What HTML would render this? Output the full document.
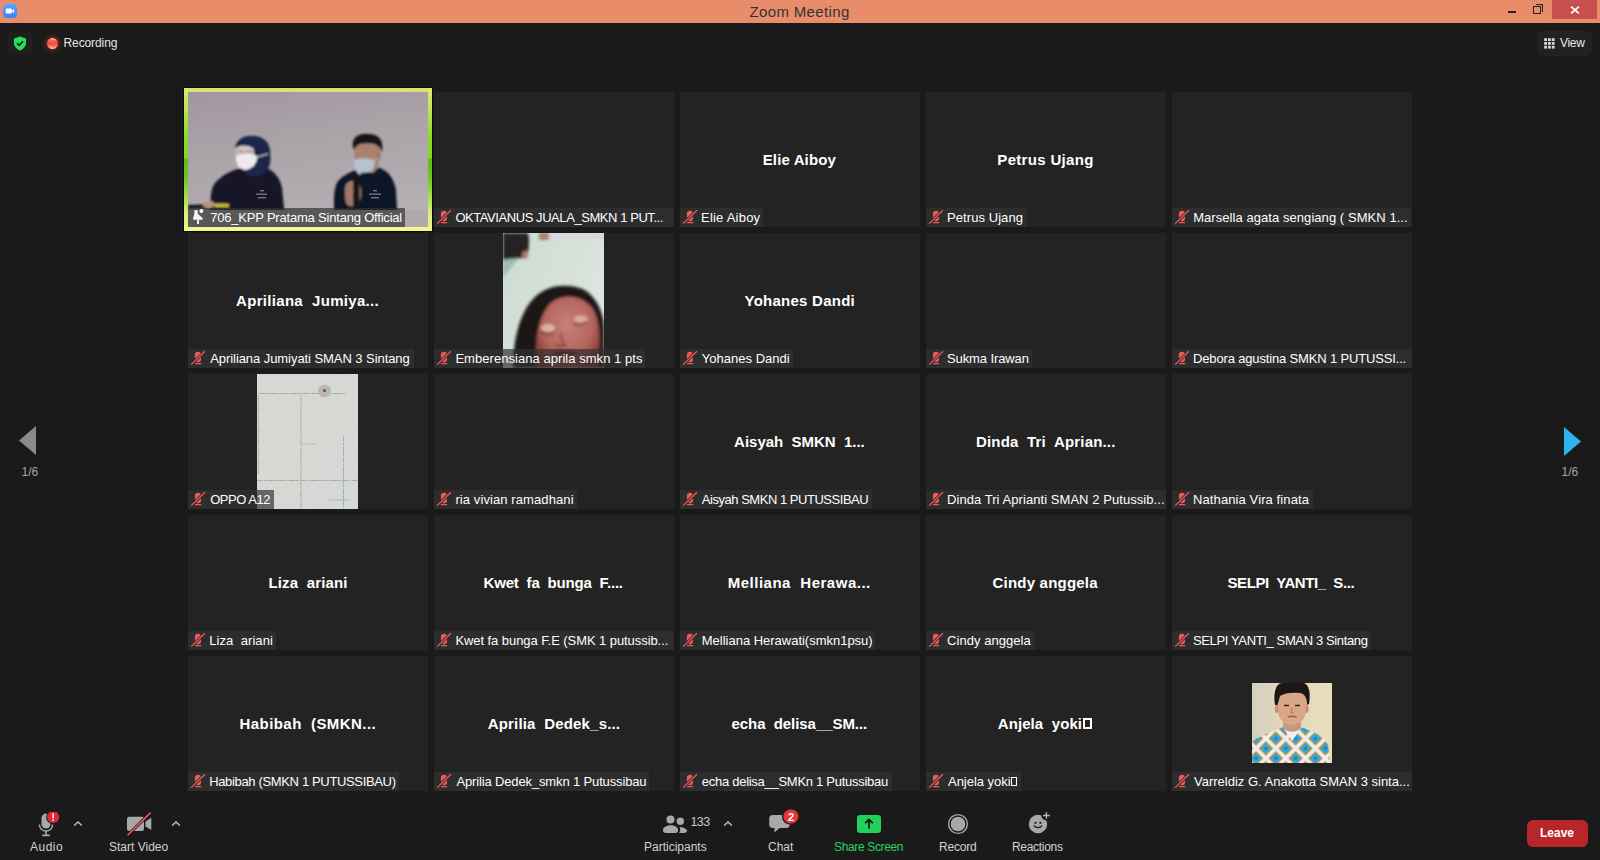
<!DOCTYPE html>
<html><head><meta charset="utf-8"><title>Zoom Meeting</title>
<style>
*{margin:0;padding:0;box-sizing:border-box}
html,body{width:1600px;height:860px;overflow:hidden;background:#1a1a1a;font-family:"Liberation Sans",sans-serif;position:relative}
.abs{position:absolute}
#title{left:0;top:0;width:1600px;height:23px;background:#e98c6a}
.tile{position:absolute;width:240px;height:135px;background:#232323;overflow:hidden}
.cn{position:absolute;top:58px;color:#fff;font-weight:bold;font-size:15px;white-space:pre;line-height:20px}
.lb{position:absolute;left:0;top:116px;height:19px;background:rgba(51,51,51,.69);overflow:hidden}
.lb span{position:absolute;left:22px;top:2px;color:#fff;font-size:13px;line-height:15px;white-space:pre}
.lb .mic{position:absolute;left:0;top:0}
.tl{position:absolute;top:841px;color:#d2d2d2;font-size:12px;line-height:13px;white-space:nowrap}
.tb{position:absolute;color:#c9c9c9;font-size:12px;white-space:nowrap;line-height:14px}
</style></head><body>

<div id="title" class="abs">
<div class="abs" style="left:749.5px;top:2.5px;font-size:15px;line-height:17px;color:#333;white-space:nowrap;letter-spacing:0.35px">Zoom Meeting</div>
<div class="abs" style="left:3px;top:4px;width:14px;height:14px;background:linear-gradient(to bottom,#5aa6ff,#3a82f6);border-radius:4px"></div>
<svg class="abs" style="left:5px;top:8px" width="10" height="6" viewBox="0 0 10 6"><rect x="0.7" y="0.4" width="6.2" height="5" rx="1" fill="#fff"/><path d="M7.2 2.4L9.1 0.9V4.9L7.2 3.4z" fill="#fff"/></svg>
<div class="abs" style="left:1508px;top:11px;width:8px;height:2px;background:#222"></div>
<div class="abs" style="left:1533px;top:6px;width:8px;height:8px;border:1.5px solid #222"></div><div class="abs" style="left:1535.5px;top:4px;width:7.5px;height:7.5px;border-top:1.5px solid #222;border-right:1.5px solid #222"></div>
<div class="abs" style="left:1552px;top:0;width:45px;height:19px;background:#c94f4f"></div>
<svg class="abs" style="left:1570px;top:4.5px" width="10" height="10" viewBox="0 0 10 10"><path d="M1.2 1.6L8.8 8.4M8.8 1.6L1.2 8.4" stroke="#fff" stroke-width="1.7"/></svg>
</div>
<div class="abs" style="left:8px;top:31px;width:24px;height:24px;background:#1f1f1f;border-radius:5px"></div>
<svg class="abs" style="left:13px;top:36px" width="14" height="15" viewBox="0 0 14 15"><path d="M7 0.5L13 2.5V7c0 3.6-2.6 6.2-6 7.5C3.6 13.2 1 10.6 1 7V2.5z" fill="#24df5b"/><path d="M4 7.3L6.1 9.4 10 5.4" stroke="#111" stroke-width="1.6" fill="none"/></svg>
<div class="abs" style="left:46.5px;top:38px;width:11px;height:11px;border-radius:50%;background:linear-gradient(to bottom,#ffc8bc 0%,#ff6a58 22%,#f24a38 50%,#ff7a68 78%,#ffd0c4 100%);box-shadow:0 0 5px 2px rgba(150,60,20,.55)"></div>
<div class="tb" style="left:63.5px;top:36px;color:#e6e6e6;font-size:12px;letter-spacing:-0.1px">Recording</div>
<div class="abs" style="left:1537px;top:31px;width:55px;height:25px;background:#222;border-radius:6px"></div>
<svg class="abs" style="left:1543.5px;top:37.5px" width="11" height="11" viewBox="0 0 11 11" fill="#d6d6d6"><rect x="0.2" y="0.2" width="2.8" height="2.8"/><rect x="4" y="0.2" width="2.8" height="2.8"/><rect x="7.8" y="0.2" width="2.8" height="2.8"/><rect x="0.2" y="4" width="2.8" height="2.8"/><rect x="4" y="4" width="2.8" height="2.8"/><rect x="7.8" y="4" width="2.8" height="2.8"/><rect x="0.2" y="7.8" width="2.8" height="2.8"/><rect x="4" y="7.8" width="2.8" height="2.8"/><rect x="7.8" y="7.8" width="2.8" height="2.8"/></svg>
<div class="tb" style="left:1560px;top:36px;color:#e6e6e6;font-size:12px;letter-spacing:-0.3px">View</div>
<div class="tile" style="left:188px;top:92px"><svg class="abs" style="left:0;top:0" width="240" height="135" viewBox="0 0 240 135">
<defs><linearGradient id="bg0" x1="0" y1="0" x2="0.3" y2="1"><stop offset="0" stop-color="#a1989f"/><stop offset="0.5" stop-color="#aba4a9"/><stop offset="1" stop-color="#b4afb2"/></linearGradient>
<filter id="bl0" x="-10%" y="-10%" width="120%" height="120%"><feGaussianBlur stdDeviation="0.8"/></filter>
<filter id="bl0b"><feGaussianBlur stdDeviation="0.35"/></filter></defs>
<rect width="240" height="135" fill="url(#bg0)"/>
<g filter="url(#bl0)">
<path d="M22 135 L22.5 108 C23 98 25 92 30 88 C38 80 50 76 58 75 L76 75 C86 78 92 86 94 96 L96 116 L97 135z" fill="#121828"/>
<path d="M47 58 C47 50 53 44 62 44 C72 43 81 48 82 58 L82.5 68 C82 76 78 82 72 84 L58 84 C56 80 60 76 66 74 L66 60 C62 54 52 53 47 58z" fill="#1b2748"/>
<path d="M47 57 C50 53 58 52 65 56 C67 60 67 68 66 74 L50 76 C48 70 47 64 47 57z" fill="#cfc2bf"/>
<path d="M48 60.5 C51 59 54 59 56 60.5 M58 60.5 C60 59 63 59 65 60.5" stroke="#5a5050" stroke-width="0.8" fill="none"/>
<path d="M48 65 C52 61 62 61 69 64 C70 69 66 76 58 78 C52 78 48 72 48 65z" fill="#eeeaee"/>
<path d="M69 65 L80 62" stroke="#e2e2ea" stroke-width="1"/>
<path d="M0 113 L41 111.5 L41 116 L0 117z" fill="#171717"/>
<rect x="26.5" y="111.5" width="14.5" height="4" rx="1.5" fill="#c4b63e"/>
<ellipse cx="21" cy="112.5" rx="6" ry="3.6" fill="#b89484"/>
<path d="M146 135 L146 108 C146 98 148 90 152 87 C160 80 170 77 176 76 L192 76 C202 80 206 88 208 98 L210 135z" fill="#111726"/>
<path d="M166 58 C166 48 172 43 180 43 C189 43 193 50 192 60 L190 74 C188 81 182 83 176 82 C170 81 166 74 166 58z" fill="#a8826e"/>
<ellipse cx="190.5" cy="64" rx="2.4" ry="4" fill="#9c7462"/>
<path d="M165 56 C163 46 170 41 180 42 C191 42 196 48 194 60 L191 55 C186 50 178 51 172 52 C170 53 167 55 166 58z" fill="#171413"/>
<path d="M166 68 C172 66 181 66 187 68.5 C187 77 182 83 175 83.5 C169 83 166 77 166 68z" fill="#b6c2ce"/>
<path d="M187 68 L191 65" stroke="#c4ced8" stroke-width="0.9"/>
<path d="M172 81 L184 80 L178 90z" fill="#0e1220"/>
<path d="M157 99 C156 92 161 88 167 89 C173 91 174 98 173 105 C172 111 167 115 161 114 C157 112 157 106 157 99z" fill="#a07666"/>
<rect x="165" y="83" width="6.5" height="33" rx="2.5" fill="#141414"/>
</g>
<rect x="0" y="118" width="240" height="17" fill="#aeaaac"/>
<g filter="url(#bl0b)" fill="#bcc2d0" opacity=".55">
<rect x="72" y="98" width="4" height="1.4"/><rect x="68" y="101.5" width="11" height="1.4"/><rect x="70" y="105" width="8" height="1.4"/>
<rect x="185" y="98" width="4" height="1.4"/><rect x="181" y="101.5" width="12" height="1.4"/><rect x="183" y="105" width="8" height="1.4"/>
</g></svg><div class="lb" style="width:217px;"><svg class="mic" width="18" height="18" viewBox="0 0 18 18"><path d="M6.5 2H9.5L10 6L14.6 10V11.8H5.1V10L6.3 6z" fill="#f4f4f4"/><rect x="9" y="11.5" width="2" height="4.5" fill="#eee"/><circle cx="13.4" cy="3.1" r="2" fill="#f8f8f8"/></svg><span style="left:22.20px;letter-spacing:-0.200px">706_KPP Pratama Sintang Official</span></div></div>
<div class="tile" style="left:434px;top:92px"><div class="lb" style="width:240px;"><svg class="mic" width="18" height="18" viewBox="0 0 18 18"><rect x="6.9" y="2.8" width="6.1" height="10.6" rx="3.05" fill="#ee5a58"/><rect x="6.9" y="14.1" width="6.4" height="1.1" rx=".5" fill="#ee5a58"/><path d="M3.2 15.6L16.9 2.2" stroke="#2e2e2e" stroke-width="3"/><path d="M3.2 15.6L16.9 2.2" stroke="#ee5a58" stroke-width="1.3"/></svg><span style="left:21.40px;letter-spacing:-0.434px">OKTAVIANUS JUALA_SMKN 1 PUT...</span></div></div>
<div class="tile" style="left:680px;top:92px"><div class="cn" style="left:82.70px;letter-spacing:0.133px">Elie Aiboy</div><div class="lb" style="width:83px;"><svg class="mic" width="18" height="18" viewBox="0 0 18 18"><rect x="6.9" y="2.8" width="6.1" height="10.6" rx="3.05" fill="#ee5a58"/><rect x="6.9" y="14.1" width="6.4" height="1.1" rx=".5" fill="#ee5a58"/><path d="M3.2 15.6L16.9 2.2" stroke="#2e2e2e" stroke-width="3"/><path d="M3.2 15.6L16.9 2.2" stroke="#ee5a58" stroke-width="1.3"/></svg><span style="left:21.00px;letter-spacing:0.222px">Elie Aiboy</span></div></div>
<div class="tile" style="left:926px;top:92px"><div class="cn" style="left:71.30px;letter-spacing:0.327px">Petrus Ujang</div><div class="lb" style="width:100px;"><svg class="mic" width="18" height="18" viewBox="0 0 18 18"><rect x="6.9" y="2.8" width="6.1" height="10.6" rx="3.05" fill="#ee5a58"/><rect x="6.9" y="14.1" width="6.4" height="1.1" rx=".5" fill="#ee5a58"/><path d="M3.2 15.6L16.9 2.2" stroke="#2e2e2e" stroke-width="3"/><path d="M3.2 15.6L16.9 2.2" stroke="#ee5a58" stroke-width="1.3"/></svg><span style="left:21.00px;letter-spacing:0.073px">Petrus Ujang</span></div></div>
<div class="tile" style="left:1172px;top:92px"><div class="lb" style="width:239px;"><svg class="mic" width="18" height="18" viewBox="0 0 18 18"><rect x="6.9" y="2.8" width="6.1" height="10.6" rx="3.05" fill="#ee5a58"/><rect x="6.9" y="14.1" width="6.4" height="1.1" rx=".5" fill="#ee5a58"/><path d="M3.2 15.6L16.9 2.2" stroke="#2e2e2e" stroke-width="3"/><path d="M3.2 15.6L16.9 2.2" stroke="#ee5a58" stroke-width="1.3"/></svg><span style="left:21.20px;letter-spacing:0.059px">Marsella agata sengiang ( SMKN 1...</span></div></div>
<div class="tile" style="left:188px;top:233px"><div class="cn" style="left:48.00px;letter-spacing:0.316px">Apriliana  Jumiya...</div><div class="lb" style="width:226px;"><svg class="mic" width="18" height="18" viewBox="0 0 18 18"><rect x="6.9" y="2.8" width="6.1" height="10.6" rx="3.05" fill="#ee5a58"/><rect x="6.9" y="14.1" width="6.4" height="1.1" rx=".5" fill="#ee5a58"/><path d="M3.2 15.6L16.9 2.2" stroke="#2e2e2e" stroke-width="3"/><path d="M3.2 15.6L16.9 2.2" stroke="#ee5a58" stroke-width="1.3"/></svg><span style="left:22.20px;letter-spacing:-0.063px">Apriliana Jumiyati SMAN 3 Sintang</span></div></div>
<div class="tile" style="left:434px;top:233px"><svg class="abs" style="left:69px;top:0" width="101" height="135" viewBox="0 0 101 135">
<defs><filter id="bl6" x="-20%" y="-20%" width="140%" height="140%"><feGaussianBlur stdDeviation="1.4"/></filter>
<linearGradient id="bg6" x1="0" y1="0" x2="1" y2="0.6"><stop offset="0" stop-color="#cbdcd2"/><stop offset="0.6" stop-color="#d6e1da"/><stop offset="1" stop-color="#dfe5e0"/></linearGradient>
<radialGradient id="sk6" cx="0.5" cy="0.4" r="0.65"><stop offset="0" stop-color="#c8807a"/><stop offset="0.6" stop-color="#b4665e"/><stop offset="1" stop-color="#7a3028"/></radialGradient></defs>
<rect width="101" height="135" fill="url(#bg6)"/>
<g filter="url(#bl6)">
<path d="M0 0 H25 C27 8 26 18 23 24 L14 26 L0 27z" fill="#262424"/>
<ellipse cx="22" cy="22" rx="3" ry="4" fill="#a87a70"/>
<path d="M0 27 L16 25 L2 42 L0 44z" fill="#9ebcb4"/>
<path d="M36 0 H101 V7 H36z" fill="#d8d6dc"/>
<path d="M36 0 H46 V7 H36z" fill="#b07a70"/>
<path d="M10 135 C10 108 16 78 34 62 C46 52 64 50 80 56 C94 64 101 80 101 96 V135z" fill="#1e1616"/>
<path d="M34 135 C31 112 34 84 48 70 C60 60 80 62 90 76 C98 90 98 114 94 135z" fill="url(#sk6)"/>
<ellipse cx="45" cy="95" rx="7" ry="4" fill="#e4c0b4" opacity=".85"/>
<ellipse cx="78" cy="86" rx="7" ry="3.6" fill="#e2bcb0" opacity=".8"/>
<path d="M38 99 C42 102 48 102 52 99" stroke="#5a2622" stroke-width="1.4" fill="none"/>
<path d="M70 90 C74 93 80 92 84 88" stroke="#5a2622" stroke-width="1.4" fill="none"/>
<path d="M58 100 C58 106 59 110 62 112 C58 114 54 113 52 111" stroke="#7e3a34" stroke-width="1.8" fill="none"/>
<path d="M48 120 C56 116 68 116 76 120 C68 125 56 125 48 120z" fill="#6a2420"/>
</g></svg><div class="lb" style="width:211px;"><svg class="mic" width="18" height="18" viewBox="0 0 18 18"><rect x="6.9" y="2.8" width="6.1" height="10.6" rx="3.05" fill="#ee5a58"/><rect x="6.9" y="14.1" width="6.4" height="1.1" rx=".5" fill="#ee5a58"/><path d="M3.2 15.6L16.9 2.2" stroke="#2e2e2e" stroke-width="3"/><path d="M3.2 15.6L16.9 2.2" stroke="#ee5a58" stroke-width="1.3"/></svg><span style="left:21.40px;letter-spacing:0.048px">Emberensiana aprila smkn 1 pts</span></div></div>
<div class="tile" style="left:680px;top:233px"><div class="cn" style="left:64.50px;letter-spacing:0.250px">Yohanes Dandi</div><div class="lb" style="width:113px;"><svg class="mic" width="18" height="18" viewBox="0 0 18 18"><rect x="6.9" y="2.8" width="6.1" height="10.6" rx="3.05" fill="#ee5a58"/><rect x="6.9" y="14.1" width="6.4" height="1.1" rx=".5" fill="#ee5a58"/><path d="M3.2 15.6L16.9 2.2" stroke="#2e2e2e" stroke-width="3"/><path d="M3.2 15.6L16.9 2.2" stroke="#ee5a58" stroke-width="1.3"/></svg><span style="left:21.80px;letter-spacing:0.017px">Yohanes Dandi</span></div></div>
<div class="tile" style="left:926px;top:233px"><div class="lb" style="width:106px;"><svg class="mic" width="18" height="18" viewBox="0 0 18 18"><rect x="6.9" y="2.8" width="6.1" height="10.6" rx="3.05" fill="#ee5a58"/><rect x="6.9" y="14.1" width="6.4" height="1.1" rx=".5" fill="#ee5a58"/><path d="M3.2 15.6L16.9 2.2" stroke="#2e2e2e" stroke-width="3"/><path d="M3.2 15.6L16.9 2.2" stroke="#ee5a58" stroke-width="1.3"/></svg><span style="left:21.00px;letter-spacing:-0.109px">Sukma Irawan</span></div></div>
<div class="tile" style="left:1172px;top:233px"><div class="lb" style="width:240px;"><svg class="mic" width="18" height="18" viewBox="0 0 18 18"><rect x="6.9" y="2.8" width="6.1" height="10.6" rx="3.05" fill="#ee5a58"/><rect x="6.9" y="14.1" width="6.4" height="1.1" rx=".5" fill="#ee5a58"/><path d="M3.2 15.6L16.9 2.2" stroke="#2e2e2e" stroke-width="3"/><path d="M3.2 15.6L16.9 2.2" stroke="#ee5a58" stroke-width="1.3"/></svg><span style="left:21.00px;letter-spacing:-0.156px">Debora agustina SMKN 1 PUTUSSI...</span></div></div>
<div class="tile" style="left:188px;top:374px"><svg class="abs" style="left:69px;top:0" width="101" height="135" viewBox="0 0 101 135">
<defs><filter id="bl10"><feGaussianBlur stdDeviation="0.45"/></filter>
<filter id="nz10"><feTurbulence type="fractalNoise" baseFrequency="0.08" numOctaves="2" seed="3"/><feColorMatrix values="0 0 0 0 0.5  0 0 0 0 0.5  0 0 0 0 0.5  0 0 0 0.12 0"/></filter>
<linearGradient id="bg10" x1="0" y1="0" x2="1" y2="1"><stop offset="0" stop-color="#d9dad5"/><stop offset="1" stop-color="#d6dad6"/></linearGradient></defs>
<rect width="101" height="135" fill="url(#bg10)"/>
<rect width="101" height="135" filter="url(#nz10)"/>
<g filter="url(#bl10)" stroke="#767872" stroke-width="0.65" fill="none" stroke-dasharray="1.5 0.7 4 0.9 2 1.4 6 0.6 3 1" opacity=".75">
<path d="M2 19.5 H88"/><path d="M0 106.5 H101"/><path d="M44 21 V135"/><path d="M86.5 62 V135"/><path d="M1.5 21 V100"/>
</g>
<g filter="url(#bl10)" stroke="#7a7c76" stroke-width="0.6" fill="none" opacity=".6">
<path d="M44 70 H60"/><path d="M70 126 H92"/>
</g>
<circle cx="67.5" cy="17" r="6.5" fill="#bdb7ae" filter="url(#bl10)"/>
<circle cx="67.5" cy="16.5" r="1.6" fill="#5e5850"/>
</svg><div class="lb" style="width:86px;"><svg class="mic" width="18" height="18" viewBox="0 0 18 18"><rect x="6.9" y="2.8" width="6.1" height="10.6" rx="3.05" fill="#ee5a58"/><rect x="6.9" y="14.1" width="6.4" height="1.1" rx=".5" fill="#ee5a58"/><path d="M3.2 15.6L16.9 2.2" stroke="#2e2e2e" stroke-width="3"/><path d="M3.2 15.6L16.9 2.2" stroke="#ee5a58" stroke-width="1.3"/></svg><span style="left:22.20px;letter-spacing:-0.457px">OPPO A12</span></div></div>
<div class="tile" style="left:434px;top:374px"><div class="lb" style="width:143px;"><svg class="mic" width="18" height="18" viewBox="0 0 18 18"><rect x="6.9" y="2.8" width="6.1" height="10.6" rx="3.05" fill="#ee5a58"/><rect x="6.9" y="14.1" width="6.4" height="1.1" rx=".5" fill="#ee5a58"/><path d="M3.2 15.6L16.9 2.2" stroke="#2e2e2e" stroke-width="3"/><path d="M3.2 15.6L16.9 2.2" stroke="#ee5a58" stroke-width="1.3"/></svg><span style="left:21.40px;letter-spacing:0.095px">ria vivian ramadhani</span></div></div>
<div class="tile" style="left:680px;top:374px"><div class="cn" style="left:54.10px;letter-spacing:-0.012px">Aisyah  SMKN  1...</div><div class="lb" style="width:192px;"><svg class="mic" width="18" height="18" viewBox="0 0 18 18"><rect x="6.9" y="2.8" width="6.1" height="10.6" rx="3.05" fill="#ee5a58"/><rect x="6.9" y="14.1" width="6.4" height="1.1" rx=".5" fill="#ee5a58"/><path d="M3.2 15.6L16.9 2.2" stroke="#2e2e2e" stroke-width="3"/><path d="M3.2 15.6L16.9 2.2" stroke="#ee5a58" stroke-width="1.3"/></svg><span style="left:21.80px;letter-spacing:-0.470px">Aisyah SMKN 1 PUTUSSIBAU</span></div></div>
<div class="tile" style="left:926px;top:374px"><div class="cn" style="left:50.00px;letter-spacing:0.160px">Dinda  Tri  Aprian...</div><div class="lb" style="width:240px;"><svg class="mic" width="18" height="18" viewBox="0 0 18 18"><rect x="6.9" y="2.8" width="6.1" height="10.6" rx="3.05" fill="#ee5a58"/><rect x="6.9" y="14.1" width="6.4" height="1.1" rx=".5" fill="#ee5a58"/><path d="M3.2 15.6L16.9 2.2" stroke="#2e2e2e" stroke-width="3"/><path d="M3.2 15.6L16.9 2.2" stroke="#ee5a58" stroke-width="1.3"/></svg><span style="left:21.00px;letter-spacing:0.061px">Dinda Tri Aprianti SMAN 2 Putussib...</span></div></div>
<div class="tile" style="left:1172px;top:374px"><div class="lb" style="width:141px;"><svg class="mic" width="18" height="18" viewBox="0 0 18 18"><rect x="6.9" y="2.8" width="6.1" height="10.6" rx="3.05" fill="#ee5a58"/><rect x="6.9" y="14.1" width="6.4" height="1.1" rx=".5" fill="#ee5a58"/><path d="M3.2 15.6L16.9 2.2" stroke="#2e2e2e" stroke-width="3"/><path d="M3.2 15.6L16.9 2.2" stroke="#ee5a58" stroke-width="1.3"/></svg><span style="left:21.00px;letter-spacing:0.105px">Nathania Vira finata</span></div></div>
<div class="tile" style="left:188px;top:515px"><div class="cn" style="left:80.50px;letter-spacing:0.127px">Liza  ariani</div><div class="lb" style="width:88px;"><svg class="mic" width="18" height="18" viewBox="0 0 18 18"><rect x="6.9" y="2.8" width="6.1" height="10.6" rx="3.05" fill="#ee5a58"/><rect x="6.9" y="14.1" width="6.4" height="1.1" rx=".5" fill="#ee5a58"/><path d="M3.2 15.6L16.9 2.2" stroke="#2e2e2e" stroke-width="3"/><path d="M3.2 15.6L16.9 2.2" stroke="#ee5a58" stroke-width="1.3"/></svg><span style="left:21.20px;letter-spacing:0.073px">Liza  ariani</span></div></div>
<div class="tile" style="left:434px;top:515px"><div class="cn" style="left:49.50px;letter-spacing:-0.181px">Kwet  fa  bunga  F....</div><div class="lb" style="width:240px;"><svg class="mic" width="18" height="18" viewBox="0 0 18 18"><rect x="6.9" y="2.8" width="6.1" height="10.6" rx="3.05" fill="#ee5a58"/><rect x="6.9" y="14.1" width="6.4" height="1.1" rx=".5" fill="#ee5a58"/><path d="M3.2 15.6L16.9 2.2" stroke="#2e2e2e" stroke-width="3"/><path d="M3.2 15.6L16.9 2.2" stroke="#ee5a58" stroke-width="1.3"/></svg><span style="left:21.40px;letter-spacing:-0.069px">Kwet fa bunga F.E (SMK 1 putussib...</span></div></div>
<div class="tile" style="left:680px;top:515px"><div class="cn" style="left:47.70px;letter-spacing:0.511px">Melliana  Herawa...</div><div class="lb" style="width:195px;"><svg class="mic" width="18" height="18" viewBox="0 0 18 18"><rect x="6.9" y="2.8" width="6.1" height="10.6" rx="3.05" fill="#ee5a58"/><rect x="6.9" y="14.1" width="6.4" height="1.1" rx=".5" fill="#ee5a58"/><path d="M3.2 15.6L16.9 2.2" stroke="#2e2e2e" stroke-width="3"/><path d="M3.2 15.6L16.9 2.2" stroke="#ee5a58" stroke-width="1.3"/></svg><span style="left:21.80px;letter-spacing:-0.015px">Melliana Herawati(smkn1psu)</span></div></div>
<div class="tile" style="left:926px;top:515px"><div class="cn" style="left:66.50px;letter-spacing:0.212px">Cindy anggela</div><div class="lb" style="width:109px;"><svg class="mic" width="18" height="18" viewBox="0 0 18 18"><rect x="6.9" y="2.8" width="6.1" height="10.6" rx="3.05" fill="#ee5a58"/><rect x="6.9" y="14.1" width="6.4" height="1.1" rx=".5" fill="#ee5a58"/><path d="M3.2 15.6L16.9 2.2" stroke="#2e2e2e" stroke-width="3"/><path d="M3.2 15.6L16.9 2.2" stroke="#ee5a58" stroke-width="1.3"/></svg><span style="left:21.00px;letter-spacing:0.050px">Cindy anggela</span></div></div>
<div class="tile" style="left:1172px;top:515px"><div class="cn" style="left:55.50px;letter-spacing:-0.389px">SELPI  YANTI_  S...</div><div class="lb" style="width:199px;"><svg class="mic" width="18" height="18" viewBox="0 0 18 18"><rect x="6.9" y="2.8" width="6.1" height="10.6" rx="3.05" fill="#ee5a58"/><rect x="6.9" y="14.1" width="6.4" height="1.1" rx=".5" fill="#ee5a58"/><path d="M3.2 15.6L16.9 2.2" stroke="#2e2e2e" stroke-width="3"/><path d="M3.2 15.6L16.9 2.2" stroke="#ee5a58" stroke-width="1.3"/></svg><span style="left:21.00px;letter-spacing:-0.369px">SELPI YANTI_ SMAN 3 Sintang</span></div></div>
<div class="tile" style="left:188px;top:656px"><div class="cn" style="left:51.50px;letter-spacing:0.438px">Habibah  (SMKN...</div><div class="lb" style="width:211px;"><svg class="mic" width="18" height="18" viewBox="0 0 18 18"><rect x="6.9" y="2.8" width="6.1" height="10.6" rx="3.05" fill="#ee5a58"/><rect x="6.9" y="14.1" width="6.4" height="1.1" rx=".5" fill="#ee5a58"/><path d="M3.2 15.6L16.9 2.2" stroke="#2e2e2e" stroke-width="3"/><path d="M3.2 15.6L16.9 2.2" stroke="#ee5a58" stroke-width="1.3"/></svg><span style="left:21.20px;letter-spacing:-0.346px">Habibah (SMKN 1 PUTUSSIBAU)</span></div></div>
<div class="tile" style="left:434px;top:656px"><div class="cn" style="left:53.75px;letter-spacing:0.167px">Aprilia  Dedek_s...</div><div class="lb" style="width:215px;"><svg class="mic" width="18" height="18" viewBox="0 0 18 18"><rect x="6.9" y="2.8" width="6.1" height="10.6" rx="3.05" fill="#ee5a58"/><rect x="6.9" y="14.1" width="6.4" height="1.1" rx=".5" fill="#ee5a58"/><path d="M3.2 15.6L16.9 2.2" stroke="#2e2e2e" stroke-width="3"/><path d="M3.2 15.6L16.9 2.2" stroke="#ee5a58" stroke-width="1.3"/></svg><span style="left:22.40px;letter-spacing:-0.140px">Aprilia Dedek_smkn 1 Putussibau</span></div></div>
<div class="tile" style="left:680px;top:656px"><div class="cn" style="left:51.50px;letter-spacing:-0.056px">echa  delisa__SM...</div><div class="lb" style="width:212px;"><svg class="mic" width="18" height="18" viewBox="0 0 18 18"><rect x="6.9" y="2.8" width="6.1" height="10.6" rx="3.05" fill="#ee5a58"/><rect x="6.9" y="14.1" width="6.4" height="1.1" rx=".5" fill="#ee5a58"/><path d="M3.2 15.6L16.9 2.2" stroke="#2e2e2e" stroke-width="3"/><path d="M3.2 15.6L16.9 2.2" stroke="#ee5a58" stroke-width="1.3"/></svg><span style="left:21.80px;letter-spacing:-0.276px">echa delisa__SMKn 1 Putussibau</span></div></div>
<div class="tile" style="left:926px;top:656px"><div class="cn" style="left:71.75px;letter-spacing:0.083px">Anjela  yoki<i style="display:inline-block;width:8.6px;height:11px;border:2px solid #fff;margin-left:1px"></i></div><div class="lb" style="width:95px;"><svg class="mic" width="18" height="18" viewBox="0 0 18 18"><rect x="6.9" y="2.8" width="6.1" height="10.6" rx="3.05" fill="#ee5a58"/><rect x="6.9" y="14.1" width="6.4" height="1.1" rx=".5" fill="#ee5a58"/><path d="M3.2 15.6L16.9 2.2" stroke="#2e2e2e" stroke-width="3"/><path d="M3.2 15.6L16.9 2.2" stroke="#ee5a58" stroke-width="1.3"/></svg><span style="left:22.00px;letter-spacing:-0.018px">Anjela yoki<i style="display:inline-block;width:6px;height:9px;border:1px solid #fff;margin-left:.5px"></i></span></div></div>
<div class="tile" style="left:1172px;top:656px"><svg class="abs" style="left:80px;top:27px" width="80" height="80" viewBox="0 0 80 80">
<defs><filter id="bl24" x="-10%" y="-10%" width="120%" height="120%"><feGaussianBlur stdDeviation="0.5"/></filter>
<pattern id="bat" width="14" height="14" patternUnits="userSpaceOnUse" patternTransform="translate(4 6) rotate(45)"><rect width="14" height="14" fill="#eeeef2"/><rect x="1.8" y="1.8" width="10.4" height="10.4" fill="#c49636"/><rect x="3.2" y="3.2" width="7.6" height="7.6" fill="#30a8e0"/><rect x="5.6" y="5.6" width="2.8" height="2.8" fill="#1c7cc0"/></pattern>
<linearGradient id="bg24" x1="0" y1="0" x2="1" y2="0"><stop offset="0" stop-color="#d6d0bc"/><stop offset="0.4" stop-color="#e0d8be"/><stop offset="1" stop-color="#e8dfbc"/></linearGradient></defs>
<rect width="80" height="80" fill="url(#bg24)"/>
<g filter="url(#bl24)">
<path d="M0 80 V59 C6 54 16 50 24 47 L31 44 L49 44 L56 47 C64 50 72 54 76 60 L78 80z" fill="url(#bat)"/>
<path d="M30 43 L40 58 L50 44 L47 42 L40 50 L33 42z" fill="#f0f0f4"/>
<path d="M31 34 H49 V45 C45 50 35 50 31 45z" fill="#c9987a"/>

<ellipse cx="25" cy="26" rx="2.2" ry="4" fill="#c8906e"/>
<ellipse cx="54.5" cy="26" rx="2.2" ry="4" fill="#c8906e"/>
<path d="M25.5 16 C25.5 9 31 6 40 6 C49 6 54.5 9 54.5 17 L53.5 31 C52 38 46 42 40 42 C34 42 28 38 26.5 31z" fill="#d9a788"/>
<path d="M23 22 C21 10 24 0 30 0 H52 C57 2 59 10 57 21 L55 22 C55 15 53 11 48 10 C40 9 32 10 28 13 L25.5 22z" fill="#1d1816"/>
<path d="M32 22.5 H37 M43 22.5 H48" stroke="#3a2620" stroke-width="1.3"/>
<path d="M40 25 L39 30 H42" stroke="#a87058" stroke-width="0.9" fill="none"/>
<path d="M36 34 C38.5 33 41.5 33 44.5 34" stroke="#a05a50" stroke-width="1.4" fill="none"/>
</g></svg><div class="lb" style="width:240px;"><svg class="mic" width="18" height="18" viewBox="0 0 18 18"><rect x="6.9" y="2.8" width="6.1" height="10.6" rx="3.05" fill="#ee5a58"/><rect x="6.9" y="14.1" width="6.4" height="1.1" rx=".5" fill="#ee5a58"/><path d="M3.2 15.6L16.9 2.2" stroke="#2e2e2e" stroke-width="3"/><path d="M3.2 15.6L16.9 2.2" stroke="#ee5a58" stroke-width="1.3"/></svg><span style="left:22.00px;letter-spacing:0.000px">Varreldiz G. Anakotta SMAN 3 sinta...</span></div></div>
<div class="abs" style="left:183px;top:87px;width:250px;height:145px;border:1px solid #0a0a10"></div>
<div class="abs" style="left:184px;top:88px;width:248px;height:4px;background:#d6e36c"></div>
<div class="abs" style="left:184px;top:227px;width:248px;height:4px;background:#f3f78c"></div>
<div class="abs" style="left:184px;top:88px;width:4px;height:143px;background:linear-gradient(to bottom,#dfe874 0%,#bfe24e 16%,#90da26 34%,#7ed81c 49%,#5cbf16 50%,#6cc820 62%,#a8dc4c 76%,#dcef7a 88%,#f2f68a 100%)"></div>
<div class="abs" style="left:428px;top:88px;width:4px;height:143px;background:linear-gradient(to bottom,#dfe874 0%,#bfe24e 16%,#90da26 34%,#7ed81c 49%,#5cbf16 50%,#6cc820 62%,#a8dc4c 76%,#dcef7a 88%,#f2f68a 100%)"></div>
<svg class="abs" style="left:19px;top:426px" width="18" height="30" viewBox="0 0 18 30"><path d="M17 0V29L0 14.5z" fill="#8a8a8a"/></svg>
<div class="tb" style="left:21.5px;top:465px;font-size:12px;color:#aaa398">1/6</div>
<svg class="abs" style="left:1564px;top:427px" width="18" height="30" viewBox="0 0 18 30"><path d="M0 0V29L17 14.5z" fill="#2db3f0"/></svg>
<div class="tb" style="left:1561.5px;top:465px;font-size:12px;color:#aaa398">1/6</div>
<svg class="abs" style="left:37px;top:812px" width="26" height="26" viewBox="0 0 26 26"><rect x="4.5" y="1.6" width="9" height="15" rx="4.5" fill="#a8a8a8"/><path d="M2.4 12.5c0 3.7 2.9 6.6 6.6 6.6s6.6-2.9 6.6-6.6" stroke="#a8a8a8" stroke-width="1.5" fill="none"/><path d="M9 19v4.2M5.2 23.4h7.6" stroke="#a8a8a8" stroke-width="1.6"/><circle cx="16.1" cy="5" r="7" fill="#1a1a1a"/><circle cx="16.1" cy="5" r="6.1" fill="#e0282e"/><rect x="15.3" y="1.3" width="1.6" height="5" fill="#fff"/><rect x="15.3" y="7.4" width="1.6" height="1.5" fill="#fff"/></svg>
<svg class="abs" style="left:73px;top:820px" width="10" height="7" viewBox="0 0 10 7"><path d="M1.2 5.6L5 2 8.8 5.6" stroke="#c0c0c0" stroke-width="1.4" fill="none"/></svg>
<div class="tl" style="left:30px;width:34px;letter-spacing:0.5px">Audio</div>
<svg class="abs" style="left:125px;top:811px" width="28" height="26" viewBox="0 0 28 26"><rect x="2" y="5.7" width="17" height="14.3" rx="2.2" fill="#a8a8a8"/><path d="M20.4 10.4L26.3 6.8V19L20.4 15.4z" fill="#a8a8a8"/><path d="M2.6 24.2L25.6 1.6" stroke="#1a1a1a" stroke-width="3"/><path d="M2.6 24.2L25.6 1.6" stroke="#f05a5a" stroke-width="1.5"/></svg>
<svg class="abs" style="left:171px;top:820px" width="10" height="7" viewBox="0 0 10 7"><path d="M1.2 5.6L5 2 8.8 5.6" stroke="#c0c0c0" stroke-width="1.4" fill="none"/></svg>
<div class="tl" style="left:109px;width:59px">Start Video</div>
<svg class="abs" style="left:660px;top:812px" width="30" height="24" viewBox="0 0 30 24"><circle cx="10.5" cy="7.4" r="4" fill="#a8a8a8"/><circle cx="20.3" cy="9.3" r="3.7" fill="#a8a8a8"/><path d="M3 18.3c0-2.6 3-5 7.7-5 4.4 0 7.4 2.3 7.4 4.6 0 2.2-1.3 3.1-3.4 3.1H6c-2 0-3-1-3-2.7z" fill="#a8a8a8"/><path d="M19.4 14.9c3.5 0.2 7.6 1.6 7.6 3.6 0 1.5-1 2.5-2.7 2.5h-5.3c1-1 1.2-2.3 1.2-3.3 0-1-.3-2-.8-2.8z" fill="#a8a8a8"/></svg>
<div class="tl" style="left:690.5px;top:815.5px;width:21px;font-size:12.5px;line-height:13px;letter-spacing:-0.6px;color:#c8c8c8">133</div>
<svg class="abs" style="left:723px;top:820px" width="10" height="7" viewBox="0 0 10 7"><path d="M1.2 5.6L5 2 8.8 5.6" stroke="#c0c0c0" stroke-width="1.4" fill="none"/></svg>
<div class="tl" style="left:644px;width:62px">Participants</div>
<svg class="abs" style="left:768px;top:808px" width="34" height="27" viewBox="0 0 34 27"><path d="M4.5 7h14c1.9 0 3.3 1.4 3.3 3.3v6.5c0 1.9-1.4 3.3-3.3 3.3H11.6L6.4 24.6V20.1H4.5c-1.9 0-3.3-1.4-3.3-3.3V10.3C1.2 8.4 2.6 7 4.5 7z" fill="#a8a8a8"/><rect x="14" y="0" width="18" height="16.5" rx="8" fill="#1a1a1a"/><rect x="15.4" y="1.4" width="15" height="14" rx="6.8" fill="#e8343c"/></svg>
<div class="tl" style="left:783.5px;top:810.5px;width:15px;text-align:center;font-size:11px;line-height:12px;font-weight:bold;color:#fff">2</div>
<div class="tl" style="left:768px;width:24px">Chat</div>
<svg class="abs" style="left:856px;top:814px" width="26" height="20" viewBox="0 0 26 20"><rect x="1" y="1" width="24" height="18" rx="3.2" fill="#22d15c"/><path d="M13 5.4V14.4M9.2 9.2L13 5.4 16.8 9.2" stroke="#111" stroke-width="1.7" fill="none"/></svg>
<div class="tl" style="left:834px;width:69px;color:#2ad25f;letter-spacing:-0.35px">Share Screen</div>
<svg class="abs" style="left:946px;top:812px" width="24" height="24" viewBox="0 0 24 24"><circle cx="12" cy="12" r="9.4" stroke="#a8a8a8" stroke-width="1.4" fill="none"/><circle cx="12" cy="12" r="7.3" fill="#a8a8a8"/></svg>
<div class="tl" style="left:939px;width:37px;letter-spacing:-0.2px">Record</div>
<svg class="abs" style="left:1026px;top:810px" width="28" height="26" viewBox="0 0 28 26"><circle cx="12" cy="14" r="9.2" fill="#a8a8a8"/><circle cx="20.4" cy="5.5" r="5" fill="#1a1a1a"/><path d="M20.4 2.2V8.8M17.1 5.5H23.7" stroke="#b8b8b8" stroke-width="1.3"/><circle cx="9.6" cy="12.8" r="1.1" fill="#1a1a1a"/><circle cx="14.4" cy="12.8" r="1.1" fill="#1a1a1a"/><path d="M8 15.6c1.8 2.6 6.2 2.6 8 0" stroke="#1a1a1a" stroke-width="1.3" fill="none"/></svg>
<div class="tl" style="left:1012px;width:51px;letter-spacing:-0.3px">Reactions</div>
<div class="abs" style="left:1527px;top:820px;width:61px;height:27px;background:#b8262a;border-radius:6px"></div>
<div class="tl" style="left:1540px;top:827px;width:34px;color:#fff;font-weight:bold;font-size:12px">Leave</div>
</body></html>
